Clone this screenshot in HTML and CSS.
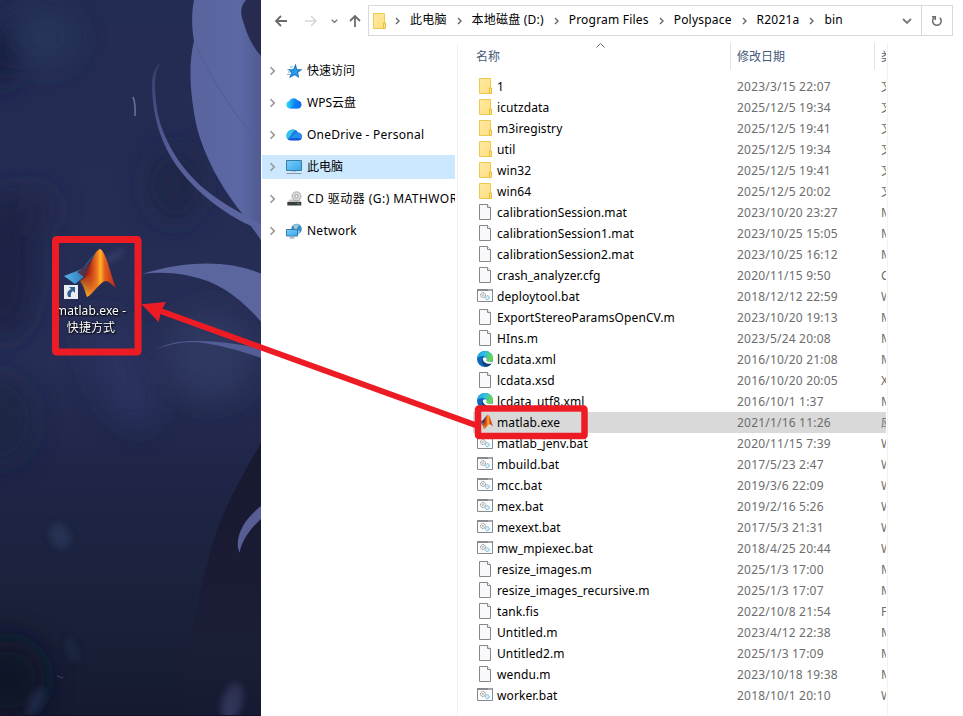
FILE: index.html
```html
<!DOCTYPE html>
<html lang="zh-CN">
<head>
    <meta charset="UTF-8">
    <meta name="viewport" content="width=device-width, initial-scale=1.0">
    <title>bin</title>
    <link rel="stylesheet" href="styles.css">
</head>
<body>

    <!-- shared icons -->
    <svg class="sprite" width="0" height="0">
        <defs>
            <linearGradient id="gFolder" x1="0" y1="0" x2="1" y2="1"><stop offset="0" stop-color="#ffe9a3"/><stop offset="1" stop-color="#ffdf7f"/></linearGradient>
            <linearGradient id="gEdge" x1="0" y1="0" x2="1" y2=".3"><stop offset="0" stop-color="#1b9de2"/><stop offset=".5" stop-color="#2fc3e0"/><stop offset="1" stop-color="#6bd84a"/></linearGradient>
            <linearGradient id="gCloud" x1="0" y1="0" x2="1" y2="0"><stop offset="0" stop-color="#2fdcf0"/><stop offset=".5" stop-color="#1292f5"/><stop offset="1" stop-color="#1160e8"/></linearGradient>
            <linearGradient id="gScreen" x1="0" y1="0" x2="1" y2="1"><stop offset="0" stop-color="#7ccdf8"/><stop offset="1" stop-color="#35a5ee"/></linearGradient>
            <linearGradient id="gBlue" x1="0" y1="0" x2="1" y2="0"><stop offset="0" stop-color="#58b3ea"/><stop offset=".6" stop-color="#2b78b4"/><stop offset="1" stop-color="#1a3f68"/></linearGradient>
            <linearGradient id="gPeak" x1="0" y1="0" x2="1" y2="0"><stop offset="0" stop-color="#5e1010"/><stop offset=".28" stop-color="#b82d16"/><stop offset=".48" stop-color="#ee7a20"/><stop offset=".57" stop-color="#ffb32b"/><stop offset=".68" stop-color="#e8621d"/><stop offset="1" stop-color="#a8231b"/></linearGradient>
            <linearGradient id="gFoot" x1="0" y1="1" x2=".35" y2="0"><stop offset="0" stop-color="#ffd93a"/><stop offset=".45" stop-color="#f39a28" stop-opacity=".4"/><stop offset=".8" stop-color="#e8621d" stop-opacity="0"/></linearGradient>
        </defs>
        <symbol id="folder" viewBox="0 0 16 18">
            <path d="M2.500 1.500h11v15h-11z" fill="url(#gFolder)" stroke="#ecc94f"/>
            <path d="M12.500 11h2v5.500h-2z" fill="#ffe28a" stroke="#e6bd3c"/>
        </symbol>
        <symbol id="file" viewBox="0 0 16 18">
            <path d="M2.500 1.500h8l3 3v12h-11z" fill="#f8f9fa" stroke="#85878a"/>
            <path d="M10.500 1.500v3h3" fill="#fff" stroke="#85878a"/>
        </symbol>
        <symbol id="bat" viewBox="0 0 16 18">
            <path d="M.5 2.500h15v12H.5z" fill="#fbfcfd" stroke="#86898d"/>
            <path d="M0 2h16v2H0z" fill="#86898d"/>
            <path d="M11.500 3h1M13.500 3h1" stroke="#fff"/>
            <circle cx="6" cy="8" r="2.400" fill="none" stroke="#7c8084" stroke-dasharray="1.2 .5"/>
            <circle cx="6" cy="8" r=".8" fill="#888"/>
            <circle cx="10.300" cy="10.700" r="2" fill="#d9eefa" stroke="#6fadd4" stroke-dasharray="1.2 .5"/>
        </symbol>
        <symbol id="edge" viewBox="0 0 16 18">
            <circle cx="8" cy="9" r="8" fill="#1068bd"/>
            <path d="M.3 8.500C.8 3.900 4 1 8 1c5 0 8 3.600 8 7.200 0 2.500-1.900 4-4 4-2 0-3-.8-2.700-1.600.6-.6.8-1.300.5-2.200C9.300 7 7.800 6 5.700 6 3.200 6 1.200 7 .3 8.500z" fill="url(#gEdge)"/>
            <path d="M5.800 8.300c-1.600 2.200-.8 6.200 2.500 8.200 2.900.4 5.300-1.300 6.500-3.200-3.200 1.600-7.700.4-9-5z" fill="#123d72"/>
            <path d="M9.300 10.600c.8-.8.700-2-.3-2.900-1.500-.9-3.300.1-3.200 1.700.6 3.200 4.500 5 8.600 4 1-.7 1.300-1.800.6-2-2.200 1.100-5.300.7-5.700-.8z" fill="#fff"/>
        </symbol>
        <symbol id="matlab" viewBox="0 0 52 49">
            <path d="M0 27 18 20C22 17 28 5 36 0L30 18 20 28 11 35z" fill="url(#gBlue)"/>
            <path d="M18 20C23 16 25 12 29 8L27 20 20 28 13 23z" fill="#5b1c2b" opacity=".75"/>
            <path d="M16 32C24 28 29 1 36 0 42 2 47 27 52 39 48 36 45 32 42 32 35 33 30 45 23 48 21 43 20 37 16 32z" fill="url(#gPeak)"/>
            <path d="M16 32C24 28 31 20 36 10 39 20 36 30 33 37 29 42 27 46 23 48 21 43 20 37 16 32z" fill="url(#gFoot)"/>
        </symbol>
        <symbol id="star" viewBox="0 0 16 16">
            <path d="m9.500 2.300 1.100 4.200 4.600.2-3.700 2.600.9 4.600-3.900-2.500-4.300 2.500 1.800-4.700L3 6.700h4.600z" fill="#2d9cea" stroke="#1c78c4" stroke-width="1.100"/>
            <path d="M4 4h3M1.500 6.500h3M2 9h3M1 11.500h3" stroke="#4f9dd0" stroke-width=".8"/>
        </symbol>
        <symbol id="cloud" viewBox="0 0 16 16">
            <path d="M4 13.500a3.800 3.800 0 0 1-.6-7.500A5 5 0 0 1 12 5.600a4 4 0 0 1 0 7.900z" fill="url(#gCloud)"/>
            <path d="M3.500 13.500C7 13 7 8 10.500 7c2.500-.6 4.500.3 5 2.500 0 2.300-1.500 4-3.500 4z" fill="#0b78f2" opacity=".65"/>
        </symbol>
        <symbol id="onedrive" viewBox="0 0 16 16">
            <path d="M3.800 13.300A3.900 3.900 0 0 1 2 6.500C3.500 2 9.500 1 12 5.500c2.500.3 4 1.800 4 4s-1.700 3.800-3.500 3.800z" fill="#1d78dc"/>
            <path d="M.3 8.500C.5 4.600 4.800 1.200 9 3.200c-3 1.800-4 6.500-7.500 8.500-.8-.8-1.300-2-1.200-3.200z" fill="#34c4ef"/>
            <path d="M3.500 13.200C5 11.500 7.500 6 12 5.500c2.500.3 4 1.800 4 4s-1.700 3.800-3.500 3.800z" fill="#2590ef"/>
            <path d="M2 12.500c4-1.500 8-1.500 13.500-.8-.8 1-1.800 1.600-3 1.600H4c-.8 0-1.500-.4-2-.8z" fill="#154ed2"/>
        </symbol>
        <symbol id="pc" viewBox="0 0 16 16">
            <path d="M.5 1.500h15v10H.5z" fill="url(#gScreen)" stroke="#3b7ba8"/>
            <path d="M6 12h4v1H6z" fill="#b9c5cf"/>
            <path d="M.5 14.500h15" stroke="#8a97a2"/>
        </symbol>
        <symbol id="cd" viewBox="0 0 16 16">
            <path d="M3.500 8.500h10l2 3h-14z" fill="#c3c5c6"/>
            <path d="M1.300 11h14v3.500h-14z" fill="#3b3d3e"/>
            <circle cx="10.500" cy="5.300" r="4.500" fill="#d8d9d9" stroke="#9d9fa0" stroke-width=".8"/>
            <circle cx="10.500" cy="5.300" r="1.600" fill="#fff" stroke="#888" stroke-width=".8"/>
            <path d="M11.500 12.700h2" stroke="#27d552"/>
        </symbol>
        <symbol id="network" viewBox="0 0 16 16">
            <circle cx="10.500" cy="6" r="5.300" fill="#3a8fc4"/>
            <path d="M7 2.500c2-2 5-1.500 6-.5-1 2-2 2-2 4s3 1 3 3l-2 2C8 9 9 4 7 2.500z" fill="#9cc9db"/>
            <path d="M.5 6.500h11v6.500H.5z" fill="url(#gScreen)" stroke="#327baf"/>
            <path d="M5 13h2v1.500H5zM3 15h6" fill="#9eb4c4" stroke="#8fa6b7" stroke-width=".8"/>
        </symbol>
        <symbol id="chev" viewBox="0 0 8 8">
            <path d="m2 1 3 3-3 3" fill="none" stroke="currentColor" stroke-width="1.400"/>
        </symbol>
        <symbol id="chevDown" viewBox="0 0 10 8">
            <path d="m1 2 4 4 4-4" fill="none" stroke="currentColor" stroke-width="1.800"/>
        </symbol>
    </svg>

    <div class="desktop">
        <svg class="wallpaper" viewBox="0 0 261 716" width="261" height="716">
            <defs>
                <linearGradient id="sky" x1="0" y1="0" x2="0" y2="1">
                    <stop offset="0" stop-color="#232c52"/><stop offset=".2" stop-color="#252c53"/><stop offset=".5" stop-color="#272e55"/>
                    <stop offset=".66" stop-color="#1f2547"/><stop offset=".83" stop-color="#1a223b"/><stop offset="1" stop-color="#151a31"/>
                </linearGradient>
                <linearGradient id="petal" x1="0" y1="0" x2="1" y2="0"><stop offset="0" stop-color="#5a649e"/><stop offset=".7" stop-color="#5b68a4"/><stop offset="1" stop-color="#515b92"/></linearGradient>
                <linearGradient id="ribbon" x1="0" y1="0" x2=".3" y2="1"><stop offset="0" stop-color="#373d6b"/><stop offset=".5" stop-color="#565e98"/><stop offset="1" stop-color="#5a659f"/></linearGradient>
                <linearGradient id="body" x1="0" y1="0" x2="0" y2="1"><stop offset="0" stop-color="#171a2f"/><stop offset=".5" stop-color="#1b1b35"/><stop offset=".8" stop-color="#1c1e36" stop-opacity=".6"/><stop offset="1" stop-color="#1c1e36" stop-opacity=".1"/></linearGradient>
                <filter id="soft" x="-50%" y="-50%" width="200%" height="200%"><feGaussianBlur stdDeviation="14"/></filter>
                <filter id="haze" x="-80%" y="-80%" width="260%" height="260%"><feGaussianBlur stdDeviation="3"/></filter>
            </defs>
            <rect width="261" height="716" fill="url(#sky)"/>
            <g filter="url(#soft)">
                <ellipse cx="0" cy="55" rx="18" ry="32" fill="#171f40"/>
                <ellipse cx="45" cy="38" rx="32" ry="28" fill="#28345a"/>
                <ellipse cx="5" cy="265" rx="30" ry="75" fill="#1a2344"/>
                <ellipse cx="35" cy="210" rx="18" ry="20" fill="#20264a"/>
                <ellipse cx="175" cy="185" rx="25" ry="35" fill="#1d2547"/>
                <ellipse cx="210" cy="355" rx="45" ry="45" fill="#2f3860"/>
                <ellipse cx="120" cy="370" rx="25" ry="60" fill="#2a3360" transform="rotate(-25 120 370)"/>
                <ellipse cx="0" cy="420" rx="30" ry="40" fill="#1d2645"/>
                <ellipse cx="10" cy="680" rx="35" ry="40" fill="#111528"/>
            </g>
            <g filter="url(#haze)">
                <ellipse cx="60" cy="536" rx="10" ry="13" fill="#283253" transform="rotate(-25 60 536)"/>
                <ellipse cx="72" cy="650" rx="5" ry="13" fill="#1f2740" transform="rotate(-15 72 650)"/>
                <ellipse cx="36" cy="702" rx="7" ry="16" fill="#1e2544" transform="rotate(25 36 702)"/>
                <ellipse cx="232" cy="702" rx="10" ry="20" fill="#343b5e" transform="rotate(15 232 702)"/>
                <path d="M106 262 122 251" stroke="#3e4672" stroke-width="4"/>
            </g>
            <path d="M261 443C240 480 218 515 207 565 198 600 190 630 188 660V716H261z" fill="url(#body)"/>
            <path d="M194 0C191 15 192 30 194 41 188 66 190 95 197 128 205 158 220 184 237 207L251 225 261 240V0z" fill="url(#petal)"/>
            <path d="M246 0C240 7 240 13 244 24 248 38 254 48 261 56V0z" fill="#272b50"/>
            <path d="M196 45C210 77 232 112 261 145" fill="none" stroke="#55609a" stroke-width="1.500"/>
            <path d="M162 62C153 70 154 90 158 115 165 145 185 175 211 194 228 207 245 215 261 225V240L251 226C225 214 199 195 179 169 159 142 152 112 152 84 152 74 156 65 162 62z" fill="url(#ribbon)"/>
            <path d="M133 97C135 102 135.500 108 135 116" fill="none" stroke="#6a73a2" stroke-width="1.500"/>
            <path d="M142 274C165 267 185 263.500 207 263.500 227 263.500 245 267 261 273.500V321.500C239 297 219 282 190 276 174 272 155 272 142 274z" fill="#5b669f"/>
            <path d="M155 350C170 342 182 341 196 341 222 341 240 345 261 348V358C238 350 220 345 200 342.500 184 341 170 344 155 350z" fill="#535d96"/>
            <path d="M261 506C247 517 236 532 238 548L239.500 553C242 540 250 529 261 519z" fill="#565e94"/>
            <path d="M57 676 63 678" stroke="#3d4661"/>
            <path d="M0 715.500h261" stroke="#101326"/>
        </svg>
        <div class="shortcut">
            <div class="shortcut-icon">
                <svg width="52" height="49"><use href="#matlab"/></svg>
                <svg class="shortcut-arrow" viewBox="0 0 14 14" width="14" height="14">
                    <path d="M0 0h14v14H0z" fill="#e9edf1"/>
                    <path d="M5 2h6v6L9 6C7 7 6.500 9 7 12H4.500C2.500 9 3 6 7 4z" fill="#2f6096"/>
                </svg>
            </div>
            <p class="shortcut-name">matlab.exe -<br>快捷方式</p>
        </div>
    </div>

    <div class="explorer">
        <div class="toolbar">
            <div class="history">
                <svg width="14" height="14" viewBox="0 0 14 14"><path d="M13 7H2M7 2 2 7l5 5" fill="none" stroke="#6b6b6b" stroke-width="1.800"/></svg>
                <svg width="14" height="14" viewBox="0 0 14 14"><path d="M1 7h11M7 2l5 5-5 5" fill="none" stroke="#d6d6d6" stroke-width="1.600"/></svg>
                <svg class="recent" width="7" height="6"><use href="#chevDown"/></svg>
                <svg width="14" height="14" viewBox="0 0 14 14"><path d="M7 13V2M2 7l5-5 5 5" fill="none" stroke="#6b6b6b" stroke-width="1.800"/></svg>
            </div>
            <div class="address">
                <svg class="address-icon" width="16" height="18"><use href="#folder"/></svg>
                <div class="crumbs" id="crumbs"></div>
                <svg class="drop" width="10" height="8"><use href="#chevDown"/></svg>
                <div class="refresh">
                    <svg width="12" height="12" viewBox="0 0 12 12"><path d="M3 2.800A4.300 4.300 0 1 0 8.800 2.800M1 1.800h3.300V5" fill="none" stroke="#6b6b6b" stroke-width="1.500"/></svg>
                </div>
            </div>
        </div>
        <div class="content">
            <ul class="nav">
                <li><svg class="arrow"><use href="#chev"/></svg><svg class="icon"><use href="#star"/></svg><span>快速访问</span></li>
                <li><svg class="arrow"><use href="#chev"/></svg><svg class="icon"><use href="#cloud"/></svg><span>WPS云盘</span></li>
                <li><svg class="arrow"><use href="#chev"/></svg><svg class="icon"><use href="#onedrive"/></svg><span class="wide">OneDrive - Personal</span></li>
                <li class="active"><svg class="arrow"><use href="#chev"/></svg><svg class="icon"><use href="#pc"/></svg><span>此电脑</span></li>
                <li><svg class="arrow"><use href="#chev"/></svg><svg class="icon"><use href="#cd"/></svg><span class="wider">CD 驱动器 (G:) MATHWORKS</span></li>
                <li><svg class="arrow"><use href="#chev"/></svg><svg class="icon"><use href="#network"/></svg><span class="wide">Network</span></li>
            </ul>
            <div class="list">
                <div class="head">
                    <span>名称</span>
                    <svg class="sort" viewBox="0 0 9 5" width="9" height="5"><path d="m.5 4.500 4-4 4 4" fill="none" stroke="#666"/></svg>
                    <span>修改日期</span>
                    <span>类型</span>
                </div>
                <div id="rows"></div>
            </div>
        </div>
    </div>

    <svg class="marks" viewBox="0 0 963 716" width="963" height="716">
        <g fill="none" stroke="#ed1c24">
            <rect x="55.500" y="239.500" width="82.500" height="112.500" rx="1" stroke-width="7"/>
            <rect x="478" y="408.500" width="106.500" height="27.500" rx="1" stroke-width="6.500"/>
            <path d="M159 310.500 478 426" stroke-width="6"/>
        </g>
        <path d="M141.500 304.300 166 302 161 311 158.700 322z" fill="#ed1c24"/>
    </svg>

    <script>
        const crumbs = ["此电脑", "本地磁盘 (D:)", "Program Files", "Polyspace", "R2021a", "bin"];

        // icon, name, date, type
        const files = [
            ["folder", "1", "2023/3/15 22:07", "文件夹"],
            ["folder", "icutzdata", "2025/12/5 19:34", "文件夹"],
            ["folder", "m3iregistry", "2025/12/5 19:41", "文件夹"],
            ["folder", "util", "2025/12/5 19:34", "文件夹"],
            ["folder", "win32", "2025/12/5 19:41", "文件夹"],
            ["folder", "win64", "2025/12/5 20:02", "文件夹"],
            ["file", "calibrationSession.mat", "2023/10/20 23:27", "MAT"],
            ["file", "calibrationSession1.mat", "2023/10/25 15:05", "MAT"],
            ["file", "calibrationSession2.mat", "2023/10/25 16:12", "MAT"],
            ["file", "crash_analyzer.cfg", "2020/11/15 9:50", "CFG"],
            ["bat", "deploytool.bat", "2018/12/12 22:59", "Windows"],
            ["file", "ExportStereoParamsOpenCV.m", "2023/10/20 19:13", "M"],
            ["file", "HIns.m", "2023/5/24 20:08", "M"],
            ["edge", "lcdata.xml", "2016/10/20 21:08", "Microsoft"],
            ["file", "lcdata.xsd", "2016/10/20 20:05", "XSD"],
            ["edge", "lcdata_utf8.xml", "2016/10/1 1:37", "Microsoft"],
            ["matlab", "matlab.exe", "2021/1/16 11:26", "应用程序"],
            ["bat", "matlab_jenv.bat", "2020/11/15 7:39", "Windows"],
            ["bat", "mbuild.bat", "2017/5/23 2:47", "Windows"],
            ["bat", "mcc.bat", "2019/3/6 22:09", "Windows"],
            ["bat", "mex.bat", "2019/2/16 5:26", "Windows"],
            ["bat", "mexext.bat", "2017/5/3 21:31", "Windows"],
            ["bat", "mw_mpiexec.bat", "2018/4/25 20:44", "Windows"],
            ["file", "resize_images.m", "2025/1/3 17:00", "M"],
            ["file", "resize_images_recursive.m", "2025/1/3 17:07", "M"],
            ["file", "tank.fis", "2022/10/8 21:54", "FIS"],
            ["file", "Untitled.m", "2023/4/12 22:38", "M"],
            ["file", "Untitled2.m", "2025/1/3 17:09", "M"],
            ["file", "wendu.m", "2023/10/18 19:38", "M"],
            ["bat", "worker.bat", "2018/10/1 20:10", "Windows"]
        ];

        document.getElementById('crumbs').innerHTML = crumbs.map((name) =>
            `<svg class="sep"><use href="#chev"/></svg><span>${name}</span>`
        ).join('');

        document.getElementById('rows').innerHTML = files.map(([icon, name, date, type]) =>
            `<div class="row${name === 'matlab.exe' ? ' selected' : ''}">
                <svg class="row-icon"><use href="#${icon}"/></svg>
                <span class="name">${name}</span>
                <span class="date">${date}</span>
                <span class="type">${type}</span>
            </div>`
        ).join('');
    </script>
</body>
</html>
```

FILE: styles.css
```css
*{
    box-sizing: border-box;
}

body{
    margin: 0;
    display: flex;
    width: 963px;
    height: 716px;
    overflow: hidden;
    position: relative;
    background-color: white;
    color: #000;
    font-family: "Noto Sans", "Noto Sans CJK SC", sans-serif;
    font-size: 12px;
    line-height: 16px;
    white-space: nowrap;
}
svg{
    display: block;
    flex: none;
}
.sprite{
    position: absolute;
}

/* desktop */
.desktop{
    position: relative;
    flex: none;
    width: 261px;
    height: 716px;
    overflow: hidden;
}
.shortcut{
    position: absolute;
    left: 52px;
    top: 249px;
    width: 78px;
}
.shortcut-icon{
    position: relative;
    margin-left: 12px;
}
.shortcut-arrow{
    position: absolute;
    left: 0;
    bottom: -1px;
}
.shortcut-name{
    margin: 4px 0 0;
    color: white;
    line-height: 17px;
    letter-spacing: .1px;
    text-align: center;
    text-shadow: 1px 1px 2px black, 0 0 2px black;
}

/* file window */
.explorer{
    flex: 1;
    min-width: 0;
    display: flex;
    flex-direction: column;
}
.toolbar{
    display: flex;
    height: 43px;
    padding: 5px 10px 7px 0;
}
.history{
    display: flex;
    align-items: center;
    width: 107px;
    padding-left: 13px;
    gap: 16px;
    color: #6b6b6b;
}
.history .recent{
    margin: 0 -6px 0 -3px;
}
.address{
    flex: 1;
    display: flex;
    align-items: center;
    border: 1px solid #d9d9d9;
}
.address-icon{
    margin-left: 2px;
}
.crumbs{
    flex: 1;
    display: flex;
    align-items: center;
    margin-left: -2px;
    letter-spacing: .2px;
}
.crumbs span{
    padding-bottom: 2px;
}
.sep{
    width: 8px;
    height: 8px;
    margin: 0 8px 0 9px;
    color: #666;
}
.drop{
    margin-right: 9px;
    color: #777;
}
.refresh{
    width: 31px;
    align-self: stretch;
    display: flex;
    align-items: center;
    justify-content: center;
    border-left: 1px solid #d9d9d9;
}
.content{
    flex: 1;
    display: flex;
    min-height: 0;
}
.nav{
    list-style-type: none;
    flex: none;
    width: 197px;
    margin: 0;
    padding: 16px 2px 0 1px;
    border-right: 1px solid #f2f2f2;
}
.nav li{
    display: flex;
    align-items: center;
    height: 24px;
    margin-bottom: 8px;
    padding-left: 6px;
    overflow: hidden;
}
.nav .active{
    background-color: #cce8ff;
}
.arrow{
    width: 10px;
    height: 10px;
    color: #999;
}
.icon{
    width: 16px;
    height: 16px;
    margin: 0 5px 0 8px;
}
.wide{
    letter-spacing: .25px;
}
.wider{
    letter-spacing: .45px;
}

.list{
    flex: none;
    width: 430px;
    padding: 0 1px 0 15px;
    border-right: 1px solid #f2f2f2;
}
.head{
    position: relative;
    display: grid;
    grid-template-columns: 257px 144px 12px;
    height: 33px;
    color: #44597a;
    overflow: hidden;
}
.head span{
    height: 27px;
    padding: 6px 0 0 3px;
}
.head span + span,
.sort + span{
    padding-left: 6px;
    border-left: 1px solid #e2e2e2;
}
.sort{
    position: absolute;
    left: 123px;
    top: 0;
}
.row{
    display: grid;
    grid-template-columns: 24px 240px 144px 5px;
    align-items: center;
    height: 21px;
    overflow: hidden;
}
.row.selected{
    background-color: #d9d9d9;
}
.row-icon{
    align-self: start;
    width: 16px;
    height: 18px;
    margin: 1px 0 0 4px;
}
.name{
    letter-spacing: .1px;
}
.date,
.type{
    color: #6d6d6d;
}
.date{
    letter-spacing: .2px;
}
.type{
    overflow: hidden;
}

/* red callouts over everything */
.marks{
    position: absolute;
    left: 0;
    top: 0;
}
```
